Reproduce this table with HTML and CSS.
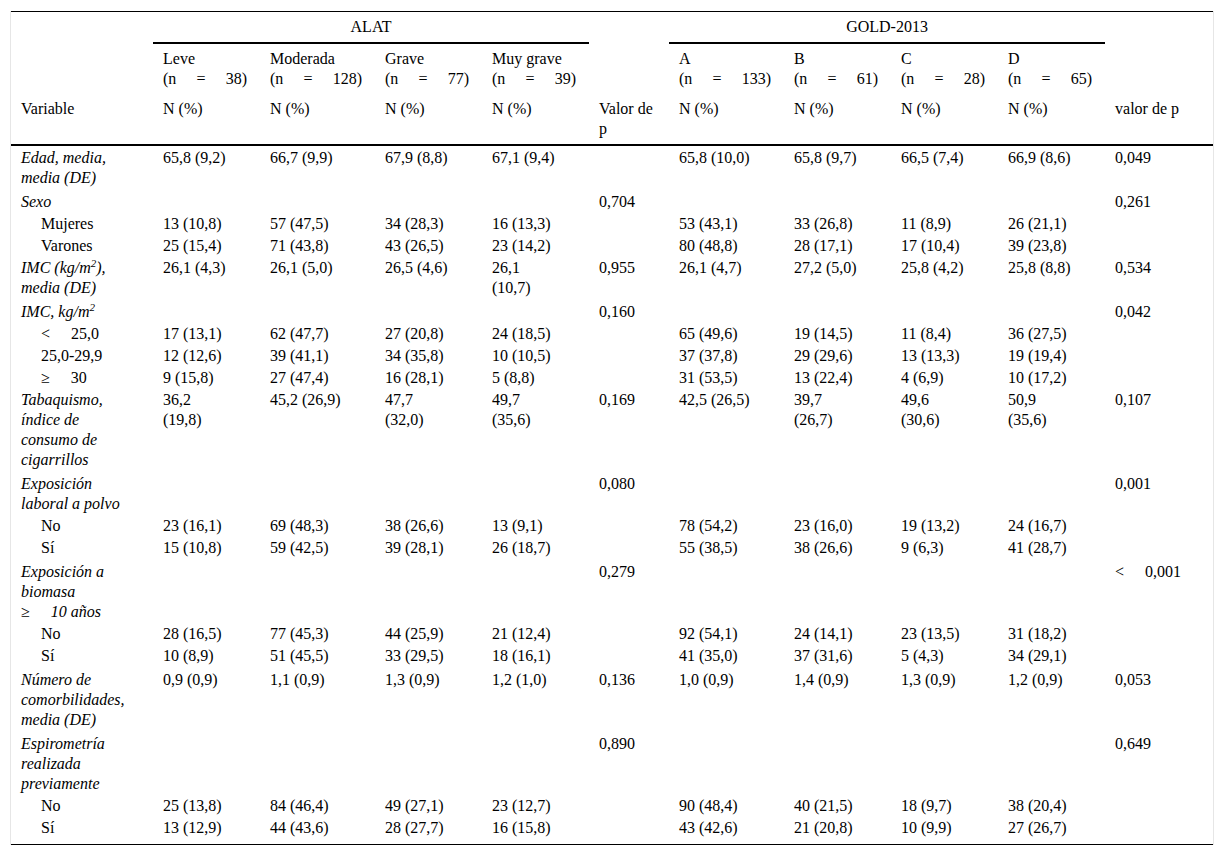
FILE: index.html
```html
<!DOCTYPE html>
<html lang="es">
<head>
<meta charset="utf-8">
<title>Tabla</title>
<link rel="stylesheet" href="styles.css">
</head>
<body>
<div class="frame">
<table class="tbl">
<colgroup>
<col class="c-var"><col class="c-n"><col class="c-w"><col class="c-n"><col class="c-n"><col class="c-p">
<col class="c-w"><col class="c-n"><col class="c-n"><col class="c-n"><col class="c-last">
</colgroup>
<thead>
<tr class="h1">
<th></th><th colspan="4" class="grp">ALAT</th><th></th><th colspan="4" class="grp">GOLD-2013</th><th></th>
</tr>
<tr class="h2">
<th></th>
<th>Leve<span class="nn">(n = 38)</span></th>
<th>Moderada<span class="nn">(n = 128)</span></th>
<th>Grave<span class="nn">(n = 77)</span></th>
<th>Muy grave<span class="nn">(n = 39)</span></th>
<th></th>
<th>A<span class="nn">(n = 133)</span></th>
<th>B<span class="nn">(n = 61)</span></th>
<th>C<span class="nn">(n = 28)</span></th>
<th>D<span class="nn">(n = 65)</span></th>
<th></th>
</tr>
<tr class="h3">
<th>Variable</th><th>N (%)</th><th>N (%)</th><th>N (%)</th><th>N (%)</th><th>Valor de<br>p</th>
<th>N (%)</th><th>N (%)</th><th>N (%)</th><th>N (%)</th><th>valor de p</th>
</tr>
</thead>
<tbody>
<tr class="tall first"><td class="v">Edad, media,<br>media (DE)</td><td>65,8 (9,2)</td><td>66,7 (9,9)</td><td>67,9 (8,8)</td><td>67,1 (9,4)</td><td></td><td>65,8 (10,0)</td><td>65,8 (9,7)</td><td>66,5 (7,4)</td><td>66,9 (8,6)</td><td>0,049</td></tr>
<tr><td class="v">Sexo</td><td></td><td></td><td></td><td></td><td>0,704</td><td></td><td></td><td></td><td></td><td>0,261</td></tr>
<tr><td class="sub">Mujeres</td><td>13 (10,8)</td><td>57 (47,5)</td><td>34 (28,3)</td><td>16 (13,3)</td><td></td><td>53 (43,1)</td><td>33 (26,8)</td><td>11 (8,9)</td><td>26 (21,1)</td><td></td></tr>
<tr><td class="sub">Varones</td><td>25 (15,4)</td><td>71 (43,8)</td><td>43 (26,5)</td><td>23 (14,2)</td><td></td><td>80 (48,8)</td><td>28 (17,1)</td><td>17 (10,4)</td><td>39 (23,8)</td><td></td></tr>
<tr class="tall"><td class="v">IMC (kg/m<sup>2</sup>),<br>media (DE)</td><td>26,1 (4,3)</td><td>26,1 (5,0)</td><td>26,5 (4,6)</td><td>26,1<br>(10,7)</td><td>0,955</td><td>26,1 (4,7)</td><td>27,2 (5,0)</td><td>25,8 (4,2)</td><td>25,8 (8,8)</td><td>0,534</td></tr>
<tr><td class="v">IMC, kg/m<sup>2</sup></td><td></td><td></td><td></td><td></td><td>0,160</td><td></td><td></td><td></td><td></td><td>0,042</td></tr>
<tr><td class="sub"><span class="sym">&lt; </span>25,0</td><td>17 (13,1)</td><td>62 (47,7)</td><td>27 (20,8)</td><td>24 (18,5)</td><td></td><td>65 (49,6)</td><td>19 (14,5)</td><td>11 (8,4)</td><td>36 (27,5)</td><td></td></tr>
<tr><td class="sub">25,0-29,9</td><td>12 (12,6)</td><td>39 (41,1)</td><td>34 (35,8)</td><td>10 (10,5)</td><td></td><td>37 (37,8)</td><td>29 (29,6)</td><td>13 (13,3)</td><td>19 (19,4)</td><td></td></tr>
<tr><td class="sub"><span class="sym">≥ </span>30</td><td>9 (15,8)</td><td>27 (47,4)</td><td>16 (28,1)</td><td>5 (8,8)</td><td></td><td>31 (53,5)</td><td>13 (22,4)</td><td>4 (6,9)</td><td>10 (17,2)</td><td></td></tr>
<tr class="tall"><td class="v">Tabaquismo,<br>índice de<br>consumo de<br>cigarrillos</td><td>36,2<br>(19,8)</td><td>45,2 (26,9)</td><td>47,7<br>(32,0)</td><td>49,7<br>(35,6)</td><td>0,169</td><td>42,5 (26,5)</td><td>39,7<br>(26,7)</td><td>49,6<br>(30,6)</td><td>50,9<br>(35,6)</td><td>0,107</td></tr>
<tr><td class="v">Exposición<br>laboral a polvo</td><td></td><td></td><td></td><td></td><td>0,080</td><td></td><td></td><td></td><td></td><td>0,001</td></tr>
<tr><td class="sub">No</td><td>23 (16,1)</td><td>69 (48,3)</td><td>38 (26,6)</td><td>13 (9,1)</td><td></td><td>78 (54,2)</td><td>23 (16,0)</td><td>19 (13,2)</td><td>24 (16,7)</td><td></td></tr>
<tr class="tall"><td class="sub">Sí</td><td>15 (10,8)</td><td>59 (42,5)</td><td>39 (28,1)</td><td>26 (18,7)</td><td></td><td>55 (38,5)</td><td>38 (26,6)</td><td>9 (6,3)</td><td>41 (28,7)</td><td></td></tr>
<tr><td class="v">Exposición a<br>biomasa<br><span class="sym up">≥ </span>10 años</td><td></td><td></td><td></td><td></td><td>0,279</td><td></td><td></td><td></td><td></td><td><span class="sym">&lt; </span>0,001</td></tr>
<tr><td class="sub">No</td><td>28 (16,5)</td><td>77 (45,3)</td><td>44 (25,9)</td><td>21 (12,4)</td><td></td><td>92 (54,1)</td><td>24 (14,1)</td><td>23 (13,5)</td><td>31 (18,2)</td><td></td></tr>
<tr class="tall"><td class="sub">Sí</td><td>10 (8,9)</td><td>51 (45,5)</td><td>33 (29,5)</td><td>18 (16,1)</td><td></td><td>41 (35,0)</td><td>37 (31,6)</td><td>5 (4,3)</td><td>34 (29,1)</td><td></td></tr>
<tr class="tall"><td class="v">Número de<br>comorbilidades,<br>media (DE)</td><td>0,9 (0,9)</td><td>1,1 (0,9)</td><td>1,3 (0,9)</td><td>1,2 (1,0)</td><td>0,136</td><td>1,0 (0,9)</td><td>1,4 (0,9)</td><td>1,3 (0,9)</td><td>1,2 (0,9)</td><td>0,053</td></tr>
<tr><td class="v">Espirometría<br>realizada<br>previamente</td><td></td><td></td><td></td><td></td><td>0,890</td><td></td><td></td><td></td><td></td><td>0,649</td></tr>
<tr><td class="sub">No</td><td>25 (13,8)</td><td>84 (46,4)</td><td>49 (27,1)</td><td>23 (12,7)</td><td></td><td>90 (48,4)</td><td>40 (21,5)</td><td>18 (9,7)</td><td>38 (20,4)</td><td></td></tr>
<tr class="last"><td class="sub">Sí</td><td>13 (12,9)</td><td>44 (43,6)</td><td>28 (27,7)</td><td>16 (15,8)</td><td></td><td>43 (42,6)</td><td>21 (20,8)</td><td>10 (9,9)</td><td>27 (26,7)</td><td></td></tr>
</tbody>
</table>
</div>
</body>
</html>
```
FILE: styles.css
```css
html, body {
  margin: 0;
  padding: 0;
  background: #ffffff;
}

body {
  font-family: "Liberation Serif", "Times New Roman", "DejaVu Serif", serif;
  font-size: 16px;
  color: #000000;
}

.frame {
  margin: 11px 0 0 10px;
  width: 1202px;
  border-left: 1px solid #e6e6e6;
  border-right: 1px solid #e6e6e6;
}

.tbl {
  width: 1202px;
  border-collapse: collapse;
  table-layout: fixed;
  border-top: 1px solid #000;
  border-bottom: 1px solid #000;
}

.c-var { width: 142px; }
.c-n { width: 107px; }
.c-w { width: 115px; }
.c-p { width: 80px; }
.c-last { width: 108px; }

th, td {
  padding: 1px 10px;
  line-height: 20px;
  text-align: left;
  vertical-align: top;
  font-weight: normal;
  font-family: inherit;
  font-size: inherit;
}

thead th {
  padding-top: 5px;
  padding-bottom: 5px;
  vertical-align: bottom;
}

thead .h3 th {
  vertical-align: top;
  border-bottom: 2px solid #000;
}

.grp {
  text-align: center;
  border-bottom: 2px solid #000;
}

.nn {
  display: block;
  text-align: justify;
  text-align-last: justify;
  margin-right: 3px;
}

tbody tr.first td {
  padding-top: 2px;
}

tbody tr.tall td {
  padding-bottom: 3px;
}

tbody tr.last td {
  padding-bottom: 6px;
}

.v {
  font-style: italic;
}

td.sub {
  padding-left: 30px;
}

.sym {
  word-spacing: 17px;
}

.up {
  font-style: normal;
}

sup {
  font-size: 11px;
  line-height: 0;
  vertical-align: 6px;
}
```
